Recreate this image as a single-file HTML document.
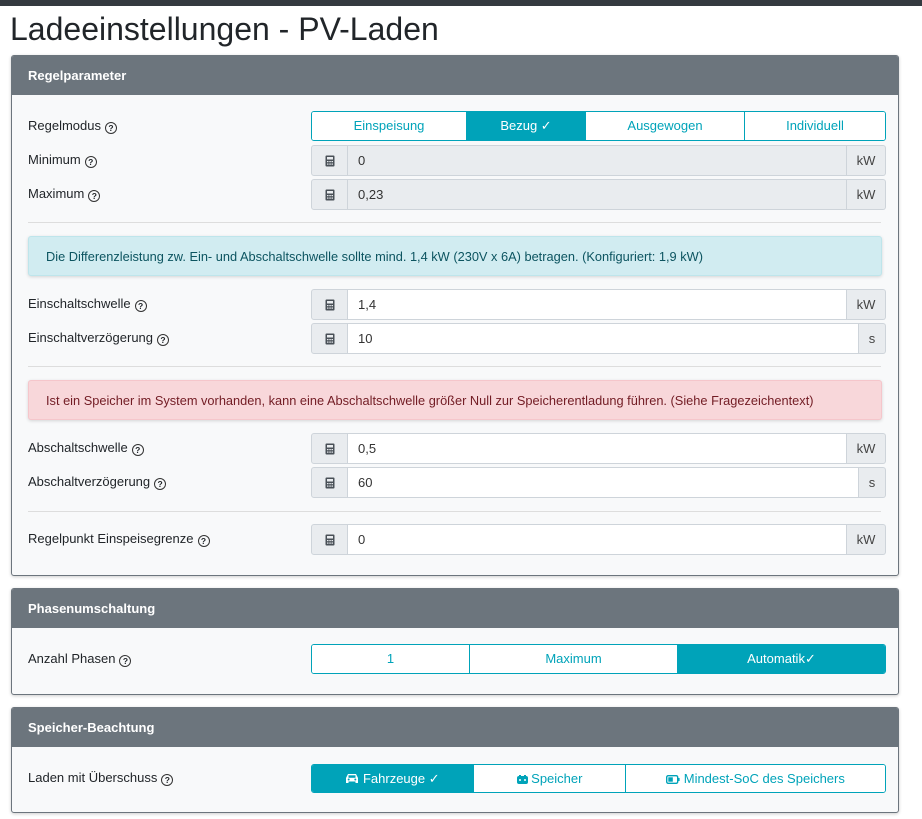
<!DOCTYPE html>
<html><head><meta charset="utf-8"><style>
*{box-sizing:border-box}
body{margin:0;width:922px;height:819px;overflow:hidden;background:#fff;font-family:"Liberation Sans",sans-serif;font-size:13px;color:#212529;position:relative}
.top{position:absolute;left:0;top:0;width:922px;height:6px;background:#343a40}
h1{position:absolute;left:10px;top:11px;margin:0;font-size:32px;font-weight:400;line-height:36px;color:#212529}
.card{position:absolute;left:11px;width:888px;border:1px solid #6c757d;border-radius:3px;background:#f8f9fa;overflow:hidden;box-shadow:0 1px 3px rgba(0,0,0,.2)}
.hd{height:39px;background:#6c757d;color:#fff;font-weight:bold;padding-left:16px;line-height:39px;font-size:13px}
.lbl{position:absolute;left:16px;line-height:30px}
.q{display:inline-block;width:12px;height:12px;border:1.3px solid #333;border-radius:50%;font-size:8.5px;line-height:10px;text-align:center;font-weight:bold;vertical-align:-1px;margin-left:4px}
.grp{position:absolute;left:299px;width:575px;height:30px;display:flex;border:1px solid #00a3b9;border-radius:3px;overflow:hidden}
.grp div{border-right:1px solid #00a3b9;color:#00a3b9;text-align:center;line-height:28px;background:#fff;font-size:13px}
.grp div:last-child{border-right:0}
.grp .on{background:#00a3b9;color:#fff}
.inp{position:absolute;left:299px;width:575px;height:31px;display:flex}
.ic{width:37px;border:1px solid #ced4da;border-radius:3px 0 0 3px;background:#e9ecef;display:flex;align-items:center;justify-content:center}
.fld{flex:1;border:1px solid #ced4da;border-left:0;background:#fff;padding-left:10px;line-height:29px;color:#333}
.dis .fld{background:#e9ecef}
.un{border:1px solid #ced4da;border-left:0;border-radius:0 3px 3px 0;background:#e9ecef;text-align:center;line-height:29px;color:#444}
.kw{width:39px}.s{width:27px}
hr{position:absolute;left:16px;width:853px;margin:0;border:0;border-top:1px solid #ddd}
.al{position:absolute;left:16px;width:854px;height:40px;border-radius:3px;padding-left:17px;line-height:40px;font-size:12.8px}
</style></head><body>
<div class="top"></div>
<h1>Ladeeinstellungen - PV-Laden</h1>
<svg width="0" height="0" style="position:absolute"><defs><symbol id="calc" viewBox="0 0 10 12"><rect x="0.5" y="0.5" width="9" height="11" rx="1" fill="#495057"/><rect x="2" y="2" width="6" height="2.5" fill="#e9ecef"/><g fill="#e9ecef"><rect x="2" y="6" width="1.5" height="1.2"/><rect x="4.3" y="6" width="1.5" height="1.2"/><rect x="6.5" y="6" width="1.5" height="1.2"/><rect x="2" y="8.5" width="1.5" height="1.2"/><rect x="4.3" y="8.5" width="1.5" height="1.2"/><rect x="6.5" y="8.5" width="1.5" height="1.2"/></g></symbol></defs></svg>

<div class="card" style="top:55px;height:521px">
<div class="hd">Regelparameter</div>
<div class="lbl" style="top:55px">Regelmodus<span class="q">?</span></div>
<div class="grp" style="top:55px"><div style="width:155px">Einspeisung</div><div class="on" style="width:119px">Bezug ✓</div><div style="width:159px">Ausgewogen</div><div style="flex:1">Individuell</div></div>
<div class="lbl" style="top:89px">Minimum<span class="q">?</span></div>
<div class="inp dis" style="top:89px"><div class="ic"><svg width="10" height="12"><use href="#calc"/></svg></div><div class="fld">0</div><div class="un kw">kW</div></div>
<div class="lbl" style="top:123px">Maximum<span class="q">?</span></div>
<div class="inp dis" style="top:123px"><div class="ic"><svg width="10" height="12"><use href="#calc"/></svg></div><div class="fld">0,23</div><div class="un kw">kW</div></div>
<hr style="top:166px">
<div class="al" style="top:180px;background:#d1ecf1;color:#0c5460;border:1px solid #bee5eb;box-shadow:0 1px 3px rgba(0,0,0,.15)">Die Differenzleistung zw. Ein- und Abschaltschwelle sollte mind. 1,4 kW (230V x 6A) betragen. (Konfiguriert: 1,9 kW)</div>
<div class="lbl" style="top:233px">Einschaltschwelle<span class="q">?</span></div>
<div class="inp" style="top:233px"><div class="ic"><svg width="10" height="12"><use href="#calc"/></svg></div><div class="fld">1,4</div><div class="un kw">kW</div></div>
<div class="lbl" style="top:267px">Einschaltverzögerung<span class="q">?</span></div>
<div class="inp" style="top:267px"><div class="ic"><svg width="10" height="12"><use href="#calc"/></svg></div><div class="fld">10</div><div class="un s">s</div></div>
<hr style="top:310px">
<div class="al" style="top:324px;background:#f8d7da;color:#721c24;border:1px solid #f5c6cb;box-shadow:0 1px 3px rgba(0,0,0,.15)">Ist ein Speicher im System vorhanden, kann eine Abschaltschwelle größer Null zur Speicherentladung führen. (Siehe Fragezeichentext)</div>
<div class="lbl" style="top:377px">Abschaltschwelle<span class="q">?</span></div>
<div class="inp" style="top:377px"><div class="ic"><svg width="10" height="12"><use href="#calc"/></svg></div><div class="fld">0,5</div><div class="un kw">kW</div></div>
<div class="lbl" style="top:411px">Abschaltverzögerung<span class="q">?</span></div>
<div class="inp" style="top:411px"><div class="ic"><svg width="10" height="12"><use href="#calc"/></svg></div><div class="fld">60</div><div class="un s">s</div></div>
<hr style="top:455px">
<div class="lbl" style="top:468px">Regelpunkt Einspeisegrenze<span class="q">?</span></div>
<div class="inp" style="top:468px"><div class="ic"><svg width="10" height="12"><use href="#calc"/></svg></div><div class="fld">0</div><div class="un kw">kW</div></div>
</div>

<div class="card" style="top:588px;height:107px">
<div class="hd">Phasenumschaltung</div>
<div class="lbl" style="top:55px">Anzahl Phasen<span class="q">?</span></div>
<div class="grp" style="top:55px"><div style="width:158px">1</div><div style="width:208px">Maximum</div><div class="on" style="flex:1">Automatik✓</div></div>
</div>

<div class="card" style="top:707px;height:106px">
<div class="hd">Speicher-Beachtung</div>
<div class="lbl" style="top:55px">Laden mit Überschuss<span class="q">?</span></div>
<div class="grp" style="top:56px;height:29px"><div class="on" style="width:162px;line-height:27px"><svg width="14" height="11" viewBox="0 0 14 11" style="vertical-align:-1px"><path d="M3 1h8l2 4v5h-2.5v-1.5h-7V10H1V5z" fill="#fff"/><rect x="3.5" y="2.3" width="7" height="2.5" fill="#00a3b9"/><circle cx="3.7" cy="6.5" r="1" fill="#00a3b9"/><circle cx="10.3" cy="6.5" r="1" fill="#00a3b9"/></svg> Fahrzeuge ✓</div><div style="width:152px;line-height:27px"><svg width="11" height="9" viewBox="0 0 11 9" style="vertical-align:-1px"><rect x="0" y="1" width="11" height="8" rx="2" fill="#00a3b9"/><rect x="2" y="0" width="2" height="2" fill="#00a3b9"/><rect x="7" y="0" width="2" height="2" fill="#00a3b9"/><circle cx="3" cy="5" r="1" fill="#fff"/><circle cx="8" cy="5" r="1" fill="#fff"/></svg> Speicher</div><div style="flex:1;line-height:27px"><svg width="14" height="9" viewBox="0 0 14 9" style="vertical-align:-1px"><rect x="0.7" y="0.7" width="11" height="7.6" rx="1.5" fill="none" stroke="#00a3b9" stroke-width="1.4"/><rect x="2.3" y="2.3" width="4.5" height="4.4" fill="#00a3b9"/><rect x="12" y="3" width="1.6" height="3" fill="#00a3b9"/></svg> Mindest-SoC des Speichers</div></div>
</div>
</body></html>
